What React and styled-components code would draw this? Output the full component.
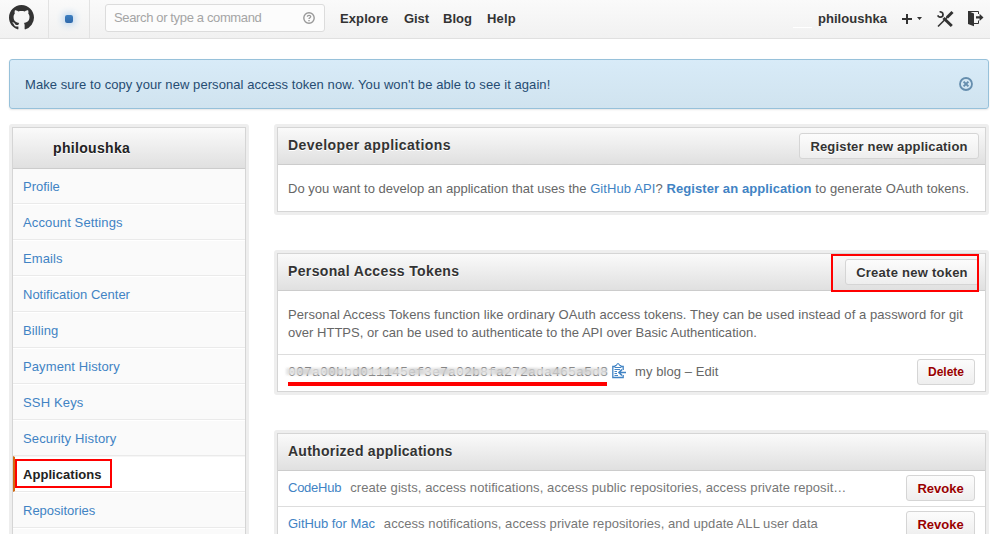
import React from "react";
import styled, { createGlobalStyle } from "styled-components";

const Global = createGlobalStyle`
  * { box-sizing: border-box; }
  html, body { margin: 0; background: #fff; overflow: hidden; }
  body { font: 13px/18px "Liberation Sans", Arial, sans-serif; color: #666; }
`;

const T = styled.span`
  letter-spacing: ${(p) => p.$ls || 0}px;
  white-space: pre;
`;
const Page = styled.div`
  position: relative;
  width: 990px;
  height: 534px;
  overflow: hidden;
`;
const Header = styled.header`
  display: flex;
  height: 39px;
  background: linear-gradient(#fafafa, #f1f1f1);
  border-bottom: 1px solid #e0e0e0;
`;
const LogoCell = styled.div`
  width: 49px;
  padding: 5px 0 0 9px;
  border-right: 1px solid #e2e2e2;
`;
const NoticeCell = styled.div`
  width: 41px;
  padding: 15px 0 0 16px;
  border-right: 1px solid #e2e2e2;
`;
const Dot = styled.div`
  width: 8px;
  height: 8px;
  border-radius: 2px;
  background: linear-gradient(#3d7fc0, #2f69ab);
  box-shadow: 0 0 7px 2px #bcd6ee;
`;
const Search = styled.div`
  display: flex;
  align-items: center;
  justify-content: space-between;
  width: 220px;
  height: 28px;
  margin: 4px 0 0 15px;
  padding: 0 9px 0 8px;
  border: 1px solid #dcdcdc;
  border-radius: 3px;
  background: #fcfcfc;
  color: #a5a5a5;
  font-size: 13px;
`;
const Nav = styled.nav`
  display: flex;
  gap: 15px;
  margin: 10px 0 0 15px;
  color: #333;
  font-weight: bold;
`;
const NavItem = styled.a`
  width: ${(p) => p.$w}px;
  white-space: nowrap;
  letter-spacing: ${(p) => p.$ls || 0}px;
`;
const Account = styled.div`
  display: flex;
  margin-left: auto;
  margin-right: -1px;
  padding-top: 9px;
  color: #333;
  font-weight: bold;
`;
const AvatarEdge = styled.i`
  width: 19px;
  height: 1px;
  margin: 18px 6px 0 0;
  background: #fff;
`;
const UserName = styled.span`
  width: 83px;
  padding-top: 1px;
  letter-spacing: 0.04px;
`;
const Tools = styled.svg`
  display: block;
  width: 90px;
  height: 20px;
`;
const Flash = styled.div`
  display: flex;
  justify-content: space-between;
  align-items: center;
  width: 980px;
  height: 50px;
  margin: 20px 0 0 9px;
  padding: 0 15px;
  border: 1px solid #97c1da;
  border-radius: 3px;
  background: linear-gradient(#d8ebf8, #d0e3ef);
  box-shadow: 0 1px 2px #e6e6e6;
  color: #264c72;
`;
const FlashText = styled.p`
  margin: 0;
  padding-top: 2px;
  letter-spacing: 0.07px;
`;
const Columns = styled.main`
  display: flex;
  align-items: flex-start;
  gap: 25px;
  padding: 15px 0 0 9px;
`;
const Frame = styled.section`
  width: ${(p) => p.$w}px;
  padding: 3px;
  border-radius: 3px;
  background: #eee;
`;
const Inner = styled.div`
  border: 1px solid #d5d5d5;
  background: ${(p) => p.$bg || "#fff"};
`;
const Head = styled.div`
  display: flex;
  justify-content: space-between;
  height: ${(p) => p.$h || 37}px;
  padding: ${(p) => p.$pad || "8px 6px 0 10px"};
  border-bottom: 1px solid #ccc;
  background: linear-gradient(#fafafa, #e0e0e0);
  color: ${(p) => p.$c || "#333"};
  font-size: 14px;
  font-weight: bold;
  text-shadow: 0 1px 0 #fff;
`;
const MenuItem = styled.a`
  display: block;
  height: 36px;
  padding: ${(p) => (p.$on ? "9px 0 0 8px" : "9px 0 0 10px")};
  border-top: 1px solid ${(p) => (p.$on ? "#f6f6f6" : "#fff")};
  border-bottom: 1px solid #eaeaea;
  border-left: ${(p) => (p.$on ? "2px solid #d26911" : "0")};
  background: ${(p) => (p.$on ? "#fff" : "#fafafa")};
  color: ${(p) => (p.$on ? "#222" : "#4183c4")};
  font-weight: ${(p) => (p.$on ? "bold" : "normal")};
  &:nth-child(2) {
    height: 35px;
    border-top: 0;
  }
`;
const Stack = styled.div`
  display: flex;
  flex-direction: column;
  gap: 35px;
`;
const Para = styled.div`
  height: ${(p) => p.$h}px;
  padding: 15px 10px 0;
`;
const Line = styled.div`
  height: 18px;
  white-space: nowrap;
`;
const Link = styled.a`
  color: #4183c4;
  font-weight: ${(p) => (p.$bold ? "bold" : "normal")};
`;
const Button = styled.button`
  flex: none;
  width: ${(p) => p.$w}px;
  height: 26px;
  margin: ${(p) => p.$m || "-3px 0 0"};
  padding: ${(p) => (p.$fs ? 0 : 1)}px 0 0;
  border: 1px solid #d5d5d5;
  border-radius: 3px;
  background: linear-gradient(#fcfcfc, #eee);
  color: ${(p) => (p.$danger ? "#900" : "#333")};
  font: bold ${(p) => p.$fs || 13}px/22px "Liberation Sans", Arial, sans-serif;
  letter-spacing: ${(p) => p.$ls || 0}px;
  text-shadow: 0 1px 0 #fff;
  white-space: nowrap;
`;
const Row = styled.div`
  display: flex;
  height: ${(p) => p.$h || 37}px;
  padding: 8px 10px 0;
  border-top: ${(p) => (p.$line ? "1px solid #ddd" : "0")};
`;
const Desc = styled.span`
  margin-left: 9px;
  color: #777;
`;
const Token = styled.code`
  position: relative;
  width: 319px;
  height: 23px;
  padding-top: 1px;
  font: 13.33px/18px "Liberation Mono", monospace;
  white-space: nowrap;
`;
const Smudge = styled.i`
  position: absolute;
  left: -2px;
  top: 5px;
  width: 321px;
  height: 7px;
  background: repeating-linear-gradient(90deg, #e2e2e2 0 9px, #d2d2d2 15px 21px, #dedede 28px);
  opacity: 0.88;
  filter: blur(0.8px);
`;
const Underline = styled.i`
  position: absolute;
  left: 0;
  top: 19px;
  width: 319px;
  height: 4px;
  background: #f00;
`;
const Mark = styled.div`
  position: absolute;
  left: ${(p) => p.$x}px;
  top: ${(p) => p.$y}px;
  width: ${(p) => p.$w}px;
  height: ${(p) => p.$h}px;
  border: 2px solid #f00;
`;
const Clip = styled.svg`
  flex: none;
  margin: 0 9px 0 5px;
`;

const menu = [
  ["Profile", 0],
  ["Account Settings", 0.13],
  ["Emails", 0.1],
  ["Notification Center", 0],
  ["Billing", 0.1],
  ["Payment History", 0.1],
  ["SSH Keys", 0.15],
  ["Security History", 0.15],
  ["Applications", 0.05],
  ["Repositories", 0],
  ["", 0],
];

export default function App() {
  return (
    <Page>
      <Global />
      <Header>
        <LogoCell>
          <svg width="25" height="25" viewBox="0 0 16 16" fill="#333">
            <path d="M8 0C3.58 0 0 3.58 0 8c0 3.54 2.29 6.53 5.47 7.59.4.07.55-.17.55-.38 0-.19-.01-.82-.01-1.49-2.01.37-2.53-.49-2.69-.94-.09-.23-.48-.94-.82-1.13-.28-.15-.68-.52-.01-.53.63-.01 1.08.58 1.23.82.72 1.21 1.87.87 2.33.66.07-.52.28-.87.51-1.07-1.78-.2-3.64-.89-3.64-3.95 0-.87.31-1.59.82-2.15-.08-.2-.36-1.02.08-2.12 0 0 .67-.21 2.2.82.64-.18 1.32-.27 2-.27s1.36.09 2 .27c1.53-1.04 2.2-.82 2.2-.82.44 1.1.16 1.92.08 2.12.51.56.82 1.27.82 2.15 0 3.07-1.87 3.75-3.65 3.95.29.25.54.73.54 1.48 0 1.07-.01 1.93-.01 2.2 0 .21.15.46.55.38A8.01 8.01 0 0 0 16 8c0-4.42-3.58-8-8-8z" />
          </svg>
        </LogoCell>
        <NoticeCell><Dot /></NoticeCell>
        <Search>
          <T $ls={-0.36}>Search or type a command</T>
          <svg width="12" height="12" viewBox="0 0 12 12" fill="none" stroke="#999">
            <circle cx="6" cy="6" r="5.2" strokeWidth="1.4" />
            <path d="M4.3 4.8C4.4 3 7.8 3 7.7 4.7C7.6 5.8 6 5.6 6 7" strokeWidth="1.3" />
            <path d="M6 8v1.3" strokeWidth="1.4" />
          </svg>
        </Search>
        <Nav>
          <NavItem $w={49} $ls={0.1}>Explore</NavItem>
          <NavItem $w={24} $ls={-0.1}>Gist</NavItem>
          <NavItem $w={29}>Blog</NavItem>
          <NavItem $w={30} $ls={0.2}>Help</NavItem>
        </Nav>
        <Account>
          <AvatarEdge />
          <UserName>philoushka</UserName>
          <Tools viewBox="0 0 90 20" fill="#333">
            <path d="M1 9h4V5h2v4h4v2H7v4H5v-4H1zM16 8h5l-2.5 3z" />
            <g fill="none" stroke="#333">
              <path d="M42.5 9L50.8 17" strokeWidth="3" />
              <path d="M51.5 3L46 8.5" strokeWidth="3" />
              <path d="M46.5 8L37 17.5" strokeWidth="1.6" />
              <path d="M38.6 2.9C41.5 2.4 42.6 5 41.7 7.2C40 8.8 37.6 8.4 36.7 6.3" strokeWidth="1.8" />
            </g>
            <path d="M67 2l6 2.6v12.6L67 15z" />
            <path d="M67 2.5h10.5V5M73 14.5h4.5v-3" fill="none" stroke="#333" strokeWidth="1" />
            <path d="M75 7.3h3.6V4.8l3.9 3.6-3.9 3.6V9.5H75z" />
          </Tools>
        </Account>
      </Header>
      <Flash>
        <FlashText>Make sure to copy your new personal access token now. You won't be able to see it again!</FlashText>
        <svg width="14" height="14" viewBox="0 0 14 14" fill="none" stroke="#668eae">
          <circle cx="7" cy="7" r="6" strokeWidth="1.8" />
          <path d="M4.6 4.6l4.8 4.8M9.4 4.6L4.6 9.4" strokeWidth="2" />
        </svg>
      </Flash>
      <Columns>
        <Frame $w={240}>
          <Inner $bg="#fafafa">
            <Head $h={41} $pad="11px 0 0 40px" $c="#222"><T $ls={0.33}>philoushka</T></Head>
            {menu.map(([name, ls]) => (
              <MenuItem key={name} $on={name === "Applications"}><T $ls={ls}>{name}</T></MenuItem>
            ))}
          </Inner>
        </Frame>
        <Stack>
          <Frame $w={715}>
            <Inner>
              <Head>
                <T $ls={0.44}>Developer applications</T>
                <Button $w={180} $ls={0.17}>Register new application</Button>
              </Head>
              <Para $h={46}>
                <Line>
                  <T $ls={0.015}>Do you want to develop an application that uses the </T>
                  <T $ls={0.09}><Link>GitHub API</Link>? <Link $bold>Register an application</Link> to generate OAuth tokens.</T>
                </Line>
              </Para>
            </Inner>
          </Frame>
          <Frame $w={715}>
            <Inner>
              <Head>
                <T $ls={0.36}>Personal Access Tokens</T>
                <Button $w={134} $ls={0.25}>Create new token</Button>
              </Head>
              <Para $h={63}>
                <Line><T $ls={0.075}>Personal Access Tokens function like ordinary OAuth access tokens. They can be used instead of a password for git</T></Line>
                <Line><T $ls={0.025}>over HTTPS, or can be used to authenticate to the API over Basic Authentication.</T></Line>
              </Para>
              <Row $line>
                <Token>007a00bbd011145ef3e7a02b8fa272ada465a5d8<Smudge /><Underline /></Token>
                <Clip width="14" height="16" viewBox="0 0 14 16" fill="none" stroke="#4183c4">
                  <path d="M3 3.5H.8v11h10.4V12M11.2 7V3.5H9" strokeWidth="1.3" />
                  <path d="M3 4.5V2.5h1.5L5 .8h2l.5 1.7H9v2z" strokeWidth="1" />
                  <path d="M2.5 6.5H8M2.5 8.5H5M2.5 10.5H5M2.5 12.5H6" />
                  <path d="M14 9.5H8M10 6.5l-3 3 3 3" strokeWidth="1.7" />
                </Clip>
                <T $ls={0.07}>my blog – Edit</T>
                <Button $w={58} $fs={12} $danger $m="-4px 0 0 auto">Delete</Button>
              </Row>
            </Inner>
          </Frame>
          <Frame $w={715}>
            <Inner>
              <Head><T $ls={0.26}>Authorized applications</T></Head>
              <Row $h={35}>
                <T $ls={-0.25}><Link>CodeHub</Link></T>
                <Desc><T $ls={0.09}>create gists, access notifications, access public repositories, access private reposit…</T></Desc>
                <Button $w={69} $danger $m="-4px 0 0 auto">Revoke</Button>
              </Row>
              <Row $line>
                <T $ls={-0.04}><Link>GitHub for Mac</Link></T>
                <Desc><T $ls={0.06}>access notifications, access private repositories, and update ALL user data</T></Desc>
                <Button $w={69} $danger $m="-4px 0 0 auto">Revoke</Button>
              </Row>
            </Inner>
          </Frame>
        </Stack>
      </Columns>
      <Mark $x={15} $y={459} $w={97} $h={29} />
      <Mark $x={831} $y={254} $w={148} $h={38} />
    </Page>
  );
}
